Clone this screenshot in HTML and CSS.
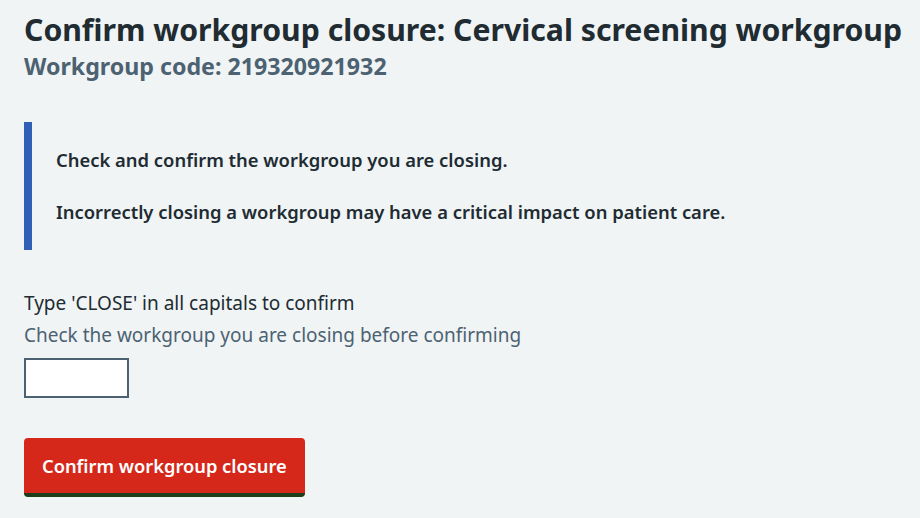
FILE: index.html
```html
<!DOCTYPE html>
<html lang="en">
<head>
<meta charset="UTF-8">
<meta name="viewport" content="width=device-width, initial-scale=1.0">
<title>Confirm workgroup closure</title>
<link rel="stylesheet" href="styles.css">
</head>
<body>

<div class="page">
  <h1 class="page-title">
    Confirm workgroup closure: Cervical screening workgroup
    <span class="page-caption">Workgroup code: 219320921932</span>
  </h1>

  <div class="inset-text">
    <p>Check and confirm the workgroup you are closing.</p>
    <p>Incorrectly closing a workgroup may have a critical impact on patient care.</p>
  </div>

  <div class="form-group">
    <label class="label" for="confirm">Type 'CLOSE' in all capitals to confirm</label>
    <div class="hint">Check the workgroup you are closing before confirming</div>
    <input class="input" id="confirm" type="text">
  </div>

  <button class="button-warning">Confirm workgroup closure</button>
</div>

</body>
</html>
```

FILE: styles.css
```css
body {
  font-family: "Noto Sans", "Open Sans", Arial, sans-serif;
  background-color: #f0f4f5;
  color: #212b32;
  margin: 0;
  padding: 0;
}

.page {
  padding: 12px 0 0 24px;
}

.page-title {
  font-size: 30.2px;
  font-weight: 700;
  line-height: 36px;
  margin: 0 0 42px 0;
}

.page-caption {
  display: block;
  font-size: 23.2px;
  line-height: 28px;
  color: #4c6272;
  margin-top: 4px;
}

.inset-text {
  border-left: 8px solid #305fb8;
  padding: 24px 0 24px 24px;
  margin-bottom: 39px;
}

.inset-text p {
  font-size: 18.4px;
  font-weight: 600;
  line-height: 28px;
  margin: 0 0 24px 0;
}

.inset-text p:last-child {
  margin-bottom: 0;
}

.form-group {
  margin-bottom: 40px;
}

.label {
  display: block;
  font-size: 19px;
  line-height: 28px;
  margin-bottom: 4px;
}

.hint {
  font-size: 19px;
  line-height: 28px;
  color: #4c6272;
  margin-bottom: 9px;
}

.input {
  display: block;
  box-sizing: border-box;
  width: 105px;
  height: 40px;
  border: 2px solid #4c6272;
  background-color: #fff;
  margin: 0;
}

.button-warning {
  display: block;
  font-family: inherit;
  font-size: 18.3px;
  font-weight: 600;
  line-height: 27px;
  color: #fff;
  background-color: #d5281b;
  border: none;
  border-bottom: 4px solid #1d3d1a;
  border-radius: 4px;
  padding: 14px 18px;
  cursor: pointer;
}
```
